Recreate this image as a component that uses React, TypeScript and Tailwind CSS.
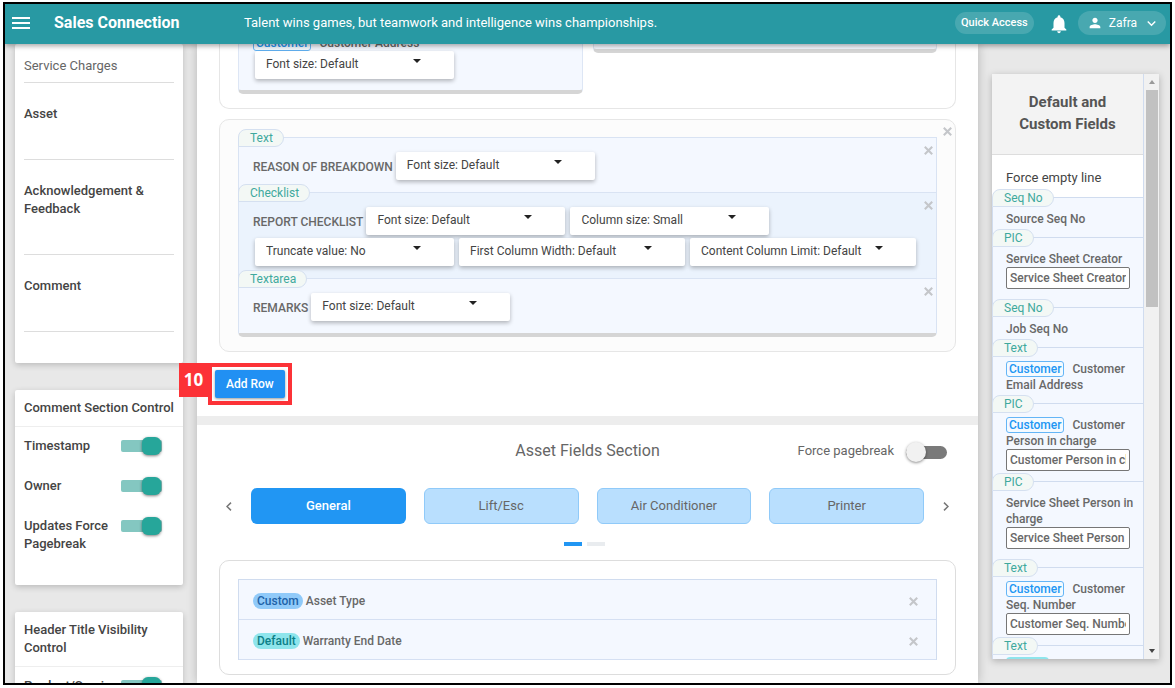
import type { ReactNode } from "react";
import { MdNotifications, MdPerson, MdKeyboardArrowDown } from "react-icons/md";

function CloseIcon() {
  return (
    <svg viewBox="0 0 9 9" className="block h-[9px] w-[9px]" fill="none" stroke="currentColor" strokeWidth="2.1">
      <path d="M0.8 0.8 8.2 8.2M8.2 0.8 0.8 8.2" />
    </svg>
  );
}

function RemoveButton({ label, className }: { label: string; className: string }) {
  return (
    <button type="button" aria-label={label} className={`p-1 text-[#c4c6ca] ${className}`}>
      <CloseIcon />
    </button>
  );
}

function Dropdown({ text, wide }: { text: string; wide?: boolean }) {
  return (
    <div className={`relative ${wide ? "w-[226px]" : "w-[199px]"}`}>
      <select
        aria-label={text.split(":")[0]}
        className="block h-7 w-full appearance-none rounded-[2px] bg-white pb-[2px] pl-[11px] text-xs text-[#444] shadow-[0_2px_4px_rgba(0,0,0,0.28)] outline-none"
      >
        <option>{text}</option>
      </select>
      <svg viewBox="0 0 8 4" className="pointer-events-none absolute top-2 right-[33px] h-1 w-2" fill="#222">
        <path d="M0 0h8L4 4z" />
      </svg>
    </div>
  );
}

function TypeTag({ children }: { children: ReactNode }) {
  return (
    <span className="absolute -top-[9px] -left-px h-[18px] rounded-tl-lg rounded-r-[9px] border border-[#d5e0f0] bg-[#f3f8f5] pr-[10px] pl-[11px] text-xs leading-4 font-normal text-[#3fa99d]">
      {children}
    </span>
  );
}

function Block({ type, label, tinted, children }: { type: string; label: string; tinted?: boolean; children: ReactNode }) {
  return (
    <div className={`relative border-t border-[#d9e3f3] pt-[14px] pb-3 pl-[14px] ${tinted ? "bg-[#ebf3fd]" : "bg-[#f4f8ff]"}`}>
      <TypeTag>{type}</TypeTag>
      <RemoveButton label={`Remove ${label}`} className="absolute top-1 -right-px" />
      {children}
    </div>
  );
}

function FieldName({ children }: { children: ReactNode }) {
  return <span className="-mr-[2px] pt-[2px] text-xs font-medium text-[#686868]">{children}</span>;
}

function Switch({ label }: { label: string }) {
  return (
    <label className="flex justify-between pr-[21px]">
      <span className="w-[88px]">{label}</span>
      <input
        type="checkbox"
        defaultChecked
        className="relative mt-[3px] h-3 w-[41px] shrink-0 appearance-none rounded-[2px] bg-[#84c7c1] before:absolute before:-top-[3px] before:right-px before:h-[18px] before:w-[19px] before:rounded-[6px] before:bg-[#26a69a] before:shadow-[0_1px_3px_rgba(0,0,0,0.5)] before:content-['']"
      />
    </label>
  );
}

function SideCard({ title, children }: { title: string; children: ReactNode }) {
  return (
    <section className="mt-[27px] rounded-[2px] bg-white shadow-[0_2px_6px_rgba(0,0,0,0.2)]">
      <h2 className="border-b border-[#eee] py-[9px] pr-2 pl-[9px]">{title}</h2>
      <div className="flex flex-col gap-[22px] pt-[10px] pb-8 pl-[9px]">{children}</div>
    </section>
  );
}

const sectionLine = "border-b border-[#ddd] pt-[22px] pb-9";

function LeftPanel() {
  return (
    <aside className="w-[192px] shrink-0 pr-[14px] pl-[10px] text-[13px] leading-[18px] font-medium text-[#444]">
      <section className="rounded-[2px] bg-white px-[9px] pb-[31px] shadow-[0_2px_6px_rgba(0,0,0,0.2)]">
        <div className="border-b border-[#ddd] pt-[13px] pb-[7px] font-normal text-[#666]">Service Charges</div>
        <div className={sectionLine}>Asset</div>
        <div className={sectionLine}>Acknowledgement &amp; Feedback</div>
        <div className={sectionLine}>Comment</div>
      </section>
      <SideCard title="Comment Section Control">
        <Switch label="Timestamp" />
        <Switch label="Owner" />
        <Switch label="Updates Force Pagebreak" />
      </SideCard>
      <SideCard title="Header Title Visibility Control">
        <Switch label="Product/Servi ce" />
      </SideCard>
    </aside>
  );
}

function CustomerChip() {
  return (
    <span className="mr-2 inline-block rounded-[3px] border border-[#64b5f6] bg-[#f4faff] px-[2px] leading-[14px] text-[#2196f3]">Customer</span>
  );
}

function PaletteItem({ type, name, customer, value, spaced }: { type: string; name: string; customer?: boolean; value?: string; spaced?: boolean }) {
  return (
    <li className={`relative border-t border-l border-[#d0dcef] pt-[13px] pl-[13px] ${spaced ? "pb-[18px]" : "pb-[10px]"}`}>
      <TypeTag>{type}</TypeTag>
      <div className="pr-1">
        {customer && <CustomerChip />}
        {name}
      </div>
      {value && (
        <div className="pr-[13px]">
          <input
            aria-label={name}
            defaultValue={value}
            className="block h-[22px] w-full rounded-[2px] border border-[#767676] bg-white px-[3px] font-medium text-[#686868] outline-none"
          />
        </div>
      )}
    </li>
  );
}

function RightPanel() {
  return (
    <aside className="flex w-[192px] shrink-0 flex-col pt-[30px] pr-[11px] pb-6 pl-[14px]">
      <div className="flex min-h-0 flex-1 bg-white shadow-[0_2px_7px_rgba(0,0,0,0.25)]">
        <div className="min-w-0 flex-1 overflow-hidden border-r border-[#d0dcef]">
          <h2 className="border-b border-[#ddd] bg-[#f3f3f3] px-5 pt-[17px] pb-[19px] text-center text-[15px] leading-[22px] font-bold text-[#555]">
            Default and Custom Fields
          </h2>
          <div className="pt-[14px] pb-[10px] pl-[14px] text-[13px] leading-[18px] text-[#444]">Force empty line</div>
          <ul className="bg-[#f4f8ff] text-xs leading-4 font-medium text-[#686868]">
            <PaletteItem type="Seq No" name="Source Seq No" />
            <PaletteItem type="PIC" name="Service Sheet Creator" value="Service Sheet Creator" spaced />
            <PaletteItem type="Seq No" name="Job Seq No" />
            <PaletteItem type="Text" name="Customer Email Address" customer />
            <PaletteItem type="PIC" name="Customer Person in charge" value="Customer Person in charge" customer />
            <PaletteItem type="PIC" name="Service Sheet Person in charge" value="Service Sheet Person In Charge" spaced />
            <PaletteItem type="Text" name="Customer Seq. Number" value="Customer Seq. Number" customer />
            <li className="relative border-t border-l border-[#d0dcef] pt-[11px] pb-3 pl-[13px]">
              <TypeTag>Text</TypeTag>
              <span className="block w-fit rounded-[4px] bg-[#8ee5ec] px-[2px] text-[#0c7f88]">Default</span>
            </li>
          </ul>
        </div>
        <div className="flex w-[15px] flex-col items-center bg-[#f1f1f1] py-[6px]">
          <svg viewBox="0 0 6 4" className="h-1 w-[6px] shrink-0" fill="#999"><path d="M0 4h6L3 0z" /></svg>
          <div className="mt-[6px] h-[217px] w-3 bg-[#c1c1c1]" />
          <svg viewBox="0 0 6 4" className="mt-auto h-1 w-[6px] shrink-0" fill="#444"><path d="M0 0h6L3 4z" /></svg>
        </div>
      </div>
    </aside>
  );
}

function Arrow({ next }: { next?: boolean }) {
  return (
    <button type="button" aria-label={next ? "Next" : "Previous"} className="flex w-[18px] justify-center text-[#777]">
      <svg viewBox="0 0 6 9" className="h-[9px] w-[6px]" fill="none" stroke="currentColor" strokeWidth="1.5">
        <path d={next ? "M1 0.6 5 4.5 1 8.4" : "M5 0.6 1 4.5 5 8.4"} />
      </svg>
    </button>
  );
}

const idleTab = "h-9 rounded-md border border-[#90caf9] bg-[#b9dffe] text-[#666]";

function AssetRow({ chip, chipClass, name }: { chip: string; chipClass: string; name: string }) {
  return (
    <li className="flex h-10 items-center border-b border-[#d5e0f3] pt-[5px] pr-[14px] pl-[14px] pb-[2px]">
      <span className={`rounded-lg px-1 leading-4 ${chipClass}`}>{chip}</span>
      <span className="ml-[3px]">{name}</span>
      <RemoveButton label={`Remove ${name}`} className="ml-auto" />
    </li>
  );
}

function AssetSection() {
  return (
    <section className="mt-[18px] border-t-[9px] border-[#ededed] pt-4">
      <div className="grid grid-cols-[1fr_auto_1fr] items-center pr-[31px] pl-[31px]">
        <h2 className="col-start-2 text-base leading-5 text-[#666]">Asset Fields Section</h2>
        <label className="flex items-center justify-end gap-3 text-[13px] leading-5 text-[#666]">
          Force pagebreak
          <input
            type="checkbox"
            className="relative mt-[3px] h-[13px] w-[41px] appearance-none rounded-full bg-[#7a7a7a] before:absolute before:-top-[4px] before:left-0 before:h-5 before:w-5 before:rounded-full before:bg-[#f1f1f1] before:shadow-[0_1px_3px_rgba(0,0,0,0.45)] before:content-['']"
          />
        </label>
      </div>
      <div className="mt-[27px] flex items-center gap-[13px] px-[23px]">
        <Arrow />
        <div className="grid flex-1 grid-cols-4 gap-[18px] text-[13px]">
          <button type="button" className="h-9 rounded-md bg-[#2196f3] font-medium text-white">General</button>
          <button type="button" className={idleTab}>Lift/Esc</button>
          <button type="button" className={idleTab}>Air Conditioner</button>
          <button type="button" className={idleTab}>Printer</button>
        </div>
        <Arrow next />
      </div>
      <div className="mt-[18px] flex justify-center gap-[5px] pr-[6px]">
        <span className="h-1 w-[18px] bg-[#2196f3]" />
        <span className="h-1 w-[18px] bg-[#e9ecef]" />
      </div>
      <div className="mt-[14px] mr-[22px] ml-[22px] rounded-[10px] border border-[#ddd] px-[18px] pt-[18px] pb-[14px]">
        <ul className="border border-b-0 border-[#d0dcef] bg-[#f4f8ff] text-xs font-medium text-[#686868]">
          <AssetRow chip="Custom" chipClass="bg-[#90caf9] text-[#1e62a8]" name="Asset Type" />
          <AssetRow chip="Default" chipClass="bg-[#8ee5ec] text-[#0c7f88]" name="Warranty End Date" />
        </ul>
      </div>
    </section>
  );
}

function Editor() {
  return (
    <main className="relative min-w-0 flex-1 bg-white shadow-[0_0_10px_rgba(0,0,0,0.22)]">
      <div className="-mt-5 mr-[22px] ml-[22px] rounded-b-[10px] border border-t-0 border-[#e6e6e6] px-[18px] pb-[14px]">
        <div className="grid grid-cols-2 items-start gap-[10px]">
          <div className="rounded-b-[5px] border-x border-b-4 border-x-[#dde6f5] border-b-[#d5d5d5] bg-[#f4f8ff] pt-[11px] pb-[11px] pl-[14px]">
            <div className="text-xs leading-4 font-medium text-[#686868]">
              <CustomerChip />
              Customer Address
            </div>
            <div className="pl-[2px]">
              <Dropdown text="Font size: Default" />
            </div>
          </div>
          <div className="h-[29px] rounded-b-[5px] border-x border-b-4 border-x-[#dde6f5] border-b-[#d5d5d5] bg-[#f4f8ff]" />
        </div>
      </div>

      <div className="relative mt-[10px] mr-[22px] ml-[22px] rounded-[10px] border border-[#e6e6e6] bg-[#fcfcfc] px-[18px] pt-[17px] pb-[14px]">
        <RemoveButton label="Remove row" className="absolute top-[3px] -right-px" />
        <div className="rounded-b-[5px] border-x border-b-4 border-x-[#d9e3f3] border-b-[#d5d5d5]">
          <Block type="Text" label="reason of breakdown">
            <div className="flex items-center gap-[5px]">
              <FieldName>REASON OF BREAKDOWN</FieldName>
              <Dropdown text="Font size: Default" />
            </div>
          </Block>
          <Block type="Checklist" label="report checklist" tinted>
            <div className="flex items-center gap-[5px]">
              <FieldName>REPORT CHECKLIST</FieldName>
              <Dropdown text="Font size: Default" />
              <Dropdown text="Column size: Small" />
            </div>
            <div className="mt-[3px] flex gap-[5px] pl-[2px]">
              <Dropdown text="Truncate value: No" />
              <Dropdown text="First Column Width: Default" wide />
              <Dropdown text="Content Column Limit: Default" wide />
            </div>
          </Block>
          <Block type="Textarea" label="remarks">
            <div className="flex items-center gap-[5px]">
              <FieldName>REMARKS</FieldName>
              <Dropdown text="Font size: Default" />
            </div>
          </Block>
        </div>
      </div>

      <div className="relative mt-[18px] ml-[18px] w-fit">
        <button type="button" className="block h-7 rounded-[2px] bg-[#2190f3] px-[11px] text-xs font-medium text-white shadow-[0_1px_3px_rgba(0,0,0,0.4)]">
          Add Row
        </button>
        <div className="pointer-events-none absolute -inset-[7px] border-4 border-[#fc3237]" />
        <div className="absolute -top-[7px] right-full mr-[7px] flex h-[34px] w-[29px] items-center justify-center bg-[#fc3237] font-['Open_Sans',sans-serif] text-[17px] font-bold text-white">
          10
        </div>
      </div>

      <AssetSection />
    </main>
  );
}

function Header() {
  return (
    <header className="relative z-10 flex h-10 shrink-0 items-center bg-[#2899a3] pr-1 pb-[2px] pl-[7px] text-white shadow-[0_2px_5px_rgba(0,0,0,0.35)]">
      <button type="button" aria-label="Menu">
        <svg viewBox="0 0 18 12" className="block h-3 w-[18px]" stroke="currentColor" strokeWidth="1.8">
          <path d="M0 1h18M0 6h18M0 11h18" />
        </svg>
      </button>
      <h1 className="ml-6 w-[190px] text-base font-bold">Sales Connection</h1>
      <p className="text-[13px]">Talent wins games, but teamwork and intelligence wins championships.</p>
      <button type="button" className="ml-auto h-[22px] rounded-full bg-white/15 px-[6px] text-[11px] font-medium">Quick Access</button>
      <button type="button" aria-label="Notifications" className="mt-[2px] ml-[14px]">
        <MdNotifications className="block h-[22px] w-[22px]" />
      </button>
      <button type="button" className="ml-2 flex h-6 items-center rounded-full bg-white/15 pr-[6px] pl-[9px] text-xs">
        <MdPerson className="h-4 w-4" />
        <span className="mr-[6px] ml-[6px]">Zafra</span>
        <MdKeyboardArrowDown className="h-[17px] w-[17px]" />
      </button>
    </header>
  );
}

export default function App() {
  return (
    <div className="h-screen bg-white pt-[2px] pr-[3px] pb-[3px] pl-[3px] font-['Roboto',sans-serif]">
      <div className="flex h-full flex-col overflow-hidden border-2 border-black bg-[#e8e8e8]">
        <Header />
        <div className="flex min-h-0 flex-1">
          <LeftPanel />
          <Editor />
          <RightPanel />
        </div>
      </div>
    </div>
  );
}
